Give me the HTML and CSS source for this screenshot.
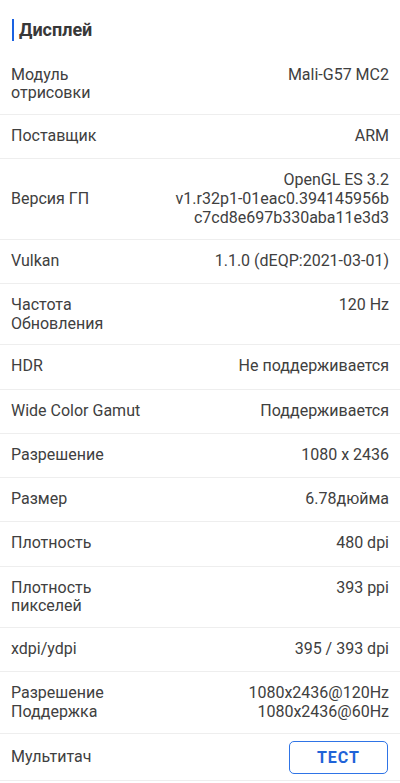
FILE: index.html
```html
<!DOCTYPE html>
<html lang="ru">
<head>
    <meta charset="UTF-8">
    <meta name="viewport" content="width=device-width, initial-scale=1.0">
    <title>Дисплей</title>
    <link rel="stylesheet" href="styles.css">
</head>
<body>
    <div class="section">
        <h2 class="section-title">Дисплей</h2>

        <div class="row">
            <div class="label">Модуль<br>отрисовки</div>
            <div class="value">Mali-G57 MC2</div>
        </div>
        <div class="row">
            <div class="label">Поставщик</div>
            <div class="value">ARM</div>
        </div>
        <div class="row center">
            <div class="label">Версия ГП</div>
            <div class="value">OpenGL ES 3.2<br>v1.r32p1-01eac0.394145956b<br>c7cd8e697b330aba11e3d3</div>
        </div>
        <div class="row">
            <div class="label">Vulkan</div>
            <div class="value">1.1.0 (dEQP:2021-03-01)</div>
        </div>
        <div class="row">
            <div class="label">Частота<br>Обновления</div>
            <div class="value">120 Hz</div>
        </div>
        <div class="row">
            <div class="label">HDR</div>
            <div class="value">Не поддерживается</div>
        </div>
        <div class="row">
            <div class="label">Wide Color Gamut</div>
            <div class="value">Поддерживается</div>
        </div>
        <div class="row">
            <div class="label">Разрешение</div>
            <div class="value">1080 x 2436</div>
        </div>
        <div class="row">
            <div class="label">Размер</div>
            <div class="value">6.78дюйма</div>
        </div>
        <div class="row">
            <div class="label">Плотность</div>
            <div class="value">480 dpi</div>
        </div>
        <div class="row">
            <div class="label">Плотность<br>пикселей</div>
            <div class="value">393 ppi</div>
        </div>
        <div class="row">
            <div class="label">xdpi/ydpi</div>
            <div class="value">395 / 393 dpi</div>
        </div>
        <div class="row">
            <div class="label">Разрешение<br>Поддержка</div>
            <div class="value">1080x2436@120Hz<br>1080x2436@60Hz</div>
        </div>
        <div class="row center action">
            <div class="label">Мультитач</div>
            <button class="btn-test">ТЕСТ</button>
        </div>
    </div>
</body>
</html>
```

FILE: styles.css
```css
body {
    font-family: Roboto, "Noto Sans", sans-serif;
    background-color: #fff;
    color: #404040;
    margin: 0;
    padding: 0;
}

.section {
    display: flex;
    flex-direction: column;
}

.section-title {
    margin: 19px 0 12.5px 12px;
    padding-left: 5px;
    border-left: 2px solid #1a62e2;
    font-size: 18px;
    font-weight: bold;
    line-height: 22px;
    color: #383838;
}

.row {
    display: flex;
    justify-content: space-between;
    align-items: flex-start;
    gap: 12px;
    min-height: 44.25px;
    box-sizing: border-box;
    padding: 12px 11px 11px;
    border-bottom: 1px solid #eeeeee;
    font-size: 16px;
    line-height: 18.75px;
}

.row.center {
    align-items: center;
}

.row.action {
    padding-top: 7px;
    padding-bottom: 6px;
}

.label {
    flex-shrink: 0;
}

.value {
    text-align: right;
}

.btn-test {
    width: 99px;
    height: 33px;
    margin-right: 1px;
    background-color: #fff;
    border: 1px solid #2f74e6;
    border-radius: 5px;
    color: #1f63d8;
    font-family: Roboto, "Noto Sans", sans-serif;
    font-size: 16px;
    font-weight: bold;
    letter-spacing: 1px;
}
```
